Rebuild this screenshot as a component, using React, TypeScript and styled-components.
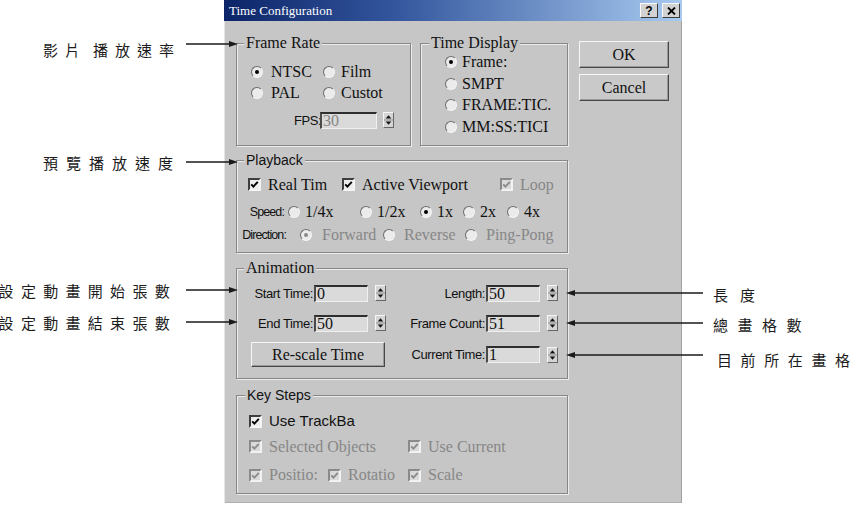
import React from "react";
import styled, { createGlobalStyle } from "styled-components";

const SERIF = `"Liberation Serif", "Times New Roman", serif`;
const SANS = `"Liberation Sans", Arial, sans-serif`;
const CJK = `"Noto Sans CJK TC", "Noto Sans CJK SC", sans-serif`;
const FACE = "#c6c6c6";
const INK = "#111";
const DIM = "#878787";

const GlobalStyle = createGlobalStyle`
  html, body {
    margin: 0;
    padding: 0;
    background: #fff;
  }
  body {
    width: 866px;
    height: 517px;
    overflow: hidden;
  }
`;

const Page = styled.div`
  display: flex;
  align-items: flex-start;
  width: 866px;
  height: 517px;
  overflow: hidden;
`;

/* ---------- callouts ---------- */

const LeftNotes = styled.div`
  flex: none;
  width: 224px;
  display: flex;
  flex-direction: column;
  align-items: flex-end;
  position: relative;
  z-index: 1;
`;

const RightNotes = styled.div`
  flex: 1;
  display: flex;
  flex-direction: column;
  align-items: flex-start;
  position: relative;
  z-index: 1;
`;

const LeftNote = styled.div<{ $mt: number }>`
  display: flex;
  align-items: center;
  justify-content: flex-end;
  width: 238px;
  height: 20px;
  margin: ${(p) => p.$mt}px -14px 0 0;
`;

const RightNote = styled.div<{ $mt: number }>`
  display: flex;
  align-items: center;
  height: 20px;
  margin: ${(p) => p.$mt}px 0 0 -116px;
`;

const NoteText = styled.span<{ $ls: number; $dy?: number; $mr?: number; $ml?: number }>`
  flex: none;
  font-family: ${CJK};
  font-size: 15px;
  line-height: 20px;
  letter-spacing: ${(p) => p.$ls}px;
  color: #1c1c1c;
  white-space: nowrap;
  margin-top: ${(p) => (p.$dy ?? 0) * 2}px;
  margin-right: ${(p) => p.$mr ?? 0}px;
  margin-left: ${(p) => p.$ml ?? 0}px;
`;

const Gap = styled.span<{ $w: number }>`
  display: inline-block;
  width: ${(p) => p.$w}px;
`;

function Arrow({ w, left }: { w: number; left?: boolean }) {
  return (
    <svg width={w} height="10" viewBox={`0 0 ${w} 10`} style={{ flex: "none" }}>
      {left ? (
        <>
          <line x1="6" y1="5" x2={w} y2="5" stroke="#1a1a1a" strokeWidth="1.5" />
          <polygon points="0,5 9,2 9,8" fill="#1a1a1a" />
        </>
      ) : (
        <>
          <line x1="0" y1="5" x2={w - 6} y2="5" stroke="#1a1a1a" strokeWidth="1.5" />
          <polygon points={`${w - 9},2 ${w},5 ${w - 9},8`} fill="#1a1a1a" />
        </>
      )}
    </svg>
  );
}

/* ---------- dialog frame ---------- */

const Dialog = styled.div`
  flex: none;
  width: 458px;
  height: 503px;
  background: ${FACE};
  display: flex;
  flex-direction: column;
  box-shadow: inset 1px 0 0 #e6e6e6, inset -1px 0 0 #a2a2a2, inset 0 -1px 0 #b0b0b0;
`;

const TitleBar = styled.div`
  height: 21px;
  display: flex;
  align-items: center;
  justify-content: space-between;
  padding: 0 2px 0 5px;
  background: linear-gradient(90deg, #0c2468 0%, #34579e 38%, #a8caf0 100%);
`;

const Title = styled.span`
  font-family: ${SERIF};
  font-size: 13px;
  color: #fff;
  white-space: nowrap;
`;

const TitleButtons = styled.div`
  display: flex;
  gap: 4px;
`;

const TitleBtn = styled.div`
  box-sizing: border-box;
  width: 18px;
  height: 15px;
  display: flex;
  align-items: center;
  justify-content: center;
  background: #d2d2d2;
  border: 1px solid;
  border-color: #fafafa #3c3c3c #3c3c3c #fafafa;
  font-family: ${SANS};
  font-weight: bold;
  font-size: 12px;
  color: #000;
`;

const Body = styled.div`
  display: flex;
  flex-direction: column;
  padding: 20px 13px 0 12px;
`;

const TopRow = styled.div`
  display: flex;
  align-items: stretch;
`;

const ButtonCol = styled.div`
  display: flex;
  flex-direction: column;
  gap: 6px;
  margin-left: 11px;
`;

const PushButton = styled.button<{ $w: number; $h: number; $ml?: number }>`
  box-sizing: border-box;
  flex: none;
  width: ${(p) => p.$w}px;
  height: ${(p) => p.$h}px;
  margin: 0 0 0 ${(p) => p.$ml ?? 0}px;
  padding: 0;
  background: #c9c9c9;
  border: 1px solid;
  border-color: #f6f6f6 #474747 #474747 #f6f6f6;
  box-shadow: inset -1px -1px 0 #999;
  font-family: ${SERIF};
  font-size: 16px;
  color: ${INK};
`;

/* ---------- group boxes ---------- */

const Group = styled.div<{ $w: number; $mt?: number; $ml?: number; $pb?: number }>`
  box-sizing: border-box;
  flex: none;
  width: ${(p) => p.$w}px;
  margin: ${(p) => p.$mt ?? 0}px 0 0 ${(p) => p.$ml ?? 0}px;
  padding-bottom: ${(p) => p.$pb ?? 0}px;
  border: 1px solid #878787;
  box-shadow: inset 1px 1px 0 #ececec, 1px 1px 0 #ececec;
  display: flex;
  flex-direction: column;
  align-items: flex-start;
`;

const Legend = styled.div<{ $sans?: boolean; $ml?: number }>`
  margin: -9px 0 0 ${(p) => p.$ml ?? 7}px;
  padding: 0 2px;
  height: 16px;
  line-height: 16px;
  background: ${FACE};
  font-family: ${(p) => (p.$sans ? SANS : SERIF)};
  font-size: ${(p) => (p.$sans ? 14 : 16)}px;
  color: ${INK};
  white-space: nowrap;
`;

const Row = styled.div<{ $mt?: number; $pl?: number; $h?: number }>`
  display: flex;
  align-items: center;
  height: ${(p) => p.$h ?? 20}px;
  margin-top: ${(p) => p.$mt ?? 0}px;
  padding-left: ${(p) => p.$pl ?? 0}px;
`;

const OptGroup = styled.div<{ $ml: number }>`
  display: flex;
  align-items: center;
  margin-left: ${(p) => p.$ml}px;
`;

const Opt = styled.div<{ $w?: number; $gap?: number }>`
  flex: none;
  display: flex;
  align-items: center;
  width: ${(p) => (p.$w ? `${p.$w}px` : "auto")};
  gap: ${(p) => p.$gap ?? 6}px;
`;

const OptText = styled.span<{ $dim?: boolean; $sans?: boolean }>`
  font-family: ${(p) => (p.$sans ? SANS : SERIF)};
  font-size: ${(p) => (p.$sans ? 15 : 16)}px;
  line-height: 18px;
  color: ${(p) => (p.$dim ? DIM : INK)};
  white-space: nowrap;
`;

const Radio = styled.span<{ $on?: boolean; $dim?: boolean }>`
  box-sizing: border-box;
  flex: none;
  width: 12px;
  height: 12px;
  border-radius: 50%;
  background: #ebebeb;
  border: 1.5px solid;
  border-color: #6c6c6c #f4f4f4 #f4f4f4 #6c6c6c;
  display: flex;
  align-items: center;
  justify-content: center;
  &::after {
    content: "";
    width: 4px;
    height: 4px;
    border-radius: 50%;
    background: ${(p) => (p.$on ? (p.$dim ? "#8a8a8a" : "#000") : "transparent")};
  }
`;

const Box = styled.span<{ $dim?: boolean }>`
  box-sizing: border-box;
  flex: none;
  width: 13px;
  height: 13px;
  background: ${(p) => (p.$dim ? "#dadada" : "#ededed")};
  border: 2px solid;
  border-color: ${(p) => (p.$dim ? "#8a8a8a #f2f2f2 #f2f2f2 #8a8a8a" : "#3e3e3e #f4f4f4 #f4f4f4 #3e3e3e")};
  display: flex;
  align-items: center;
  justify-content: center;
`;

function CheckBox({ dim }: { dim?: boolean }) {
  return (
    <Box $dim={dim}>
      <svg width="9" height="9" viewBox="0 0 9 9">
        <path d="M1.2 4.3 L3.4 6.6 L7.8 1.8" fill="none" stroke={dim ? "#8c8c8c" : "#000"} strokeWidth="1.9" />
      </svg>
    </Box>
  );
}

const SmallLabel = styled.span<{ $w: number; $size?: number; $ls?: number }>`
  box-sizing: border-box;
  flex: none;
  width: ${(p) => p.$w}px;
  padding-right: 1px;
  text-align: right;
  font-family: ${SANS};
  font-size: ${(p) => p.$size ?? 13}px;
  letter-spacing: ${(p) => p.$ls ?? -0.4}px;
  color: ${INK};
  white-space: nowrap;
`;

const Field = styled.div<{ $w: number; $dim?: boolean }>`
  box-sizing: border-box;
  flex: none;
  width: ${(p) => p.$w}px;
  height: 17px;
  padding-left: 1px;
  background: #dadada;
  border-style: solid;
  border-width: 2px 1px 1px 2px;
  border-color: #2e2e2e #f0f0f0 #f0f0f0 #4a4a4a;
  font-family: ${SERIF};
  font-size: 16px;
  line-height: 14px;
  color: ${(p) => (p.$dim ? DIM : INK)};
  white-space: nowrap;
`;

const Spin = styled.div<{ $ml: number }>`
  box-sizing: border-box;
  flex: none;
  width: 11px;
  height: 16px;
  margin-left: ${(p) => p.$ml}px;
  background: #d4d4d4;
  border: 1px solid;
  border-color: #f6f6f6 #666 #666 #f6f6f6;
  display: flex;
`;

function Spinner({ ml = 7 }: { ml?: number }) {
  return (
    <Spin $ml={ml}>
      <svg width="9" height="14" viewBox="0 0 9 14">
        <polygon points="4.5,2.2 7.3,5.6 1.7,5.6" fill="#111" />
        <line x1="0" y1="7" x2="9" y2="7" stroke="#8e8e8e" strokeWidth="1" />
        <polygon points="1.7,8.4 7.3,8.4 4.5,11.8" fill="#111" />
      </svg>
    </Spin>
  );
}

function SpinField({ label, value, lw, dim }: { label: string; value: string; lw: number; dim?: boolean }) {
  return (
    <>
      <SmallLabel $w={lw}>{label}</SmallLabel>
      <Field $w={54} $dim={dim}>
        {value}
      </Field>
      <Spinner />
    </>
  );
}

function RadioOpt(props: { text: string; w?: number; gap?: number; on?: boolean; dim?: boolean }) {
  return (
    <Opt $w={props.w} $gap={props.gap}>
      <Radio $on={props.on} $dim={props.dim} />
      <OptText $dim={props.dim}>{props.text}</OptText>
    </Opt>
  );
}

function CheckOpt(props: { text: string; w?: number; dim?: boolean; sans?: boolean }) {
  return (
    <Opt $w={props.w} $gap={7}>
      <CheckBox dim={props.dim} />
      <OptText $dim={props.dim} $sans={props.sans}>
        {props.text}
      </OptText>
    </Opt>
  );
}

export default function App() {
  return (
    <>
      <GlobalStyle />
      <Page>
        <LeftNotes>
          <LeftNote $mt={34}>
            <NoteText $ls={7} $dy={6} $mr={5}>
              影片
              <Gap $w={6} />
              播放速率
            </NoteText>
            <Arrow w={52} />
          </LeftNote>
          <LeftNote $mt={98}>
            <NoteText $ls={8} $dy={1} $mr={5}>
              預覽播放速度
            </NoteText>
            <Arrow w={52} />
          </LeftNote>
          <LeftNote $mt={108}>
            <NoteText $ls={7.3} $dy={1} $mr={9}>
              設定動畫開始張數
            </NoteText>
            <Arrow w={52} />
          </LeftNote>
          <LeftNote $mt={12}>
            <NoteText $ls={7.3} $dy={1} $mr={9}>
              設定動畫結束張數
            </NoteText>
            <Arrow w={52} />
          </LeftNote>
        </LeftNotes>

        <Dialog>
          <TitleBar>
            <Title>Time Configuration</Title>
            <TitleButtons>
              <TitleBtn>?</TitleBtn>
              <TitleBtn>
                <svg width="9" height="8" viewBox="0 0 9 8">
                  <path d="M1 0.5 L8 7.5 M8 0.5 L1 7.5" stroke="#000" strokeWidth="1.8" />
                </svg>
              </TitleBtn>
            </TitleButtons>
          </TitleBar>

          <Body>
            <TopRow>
              <Group $w={175} $mt={2} $pb={16}>
                <Legend>Frame Rate</Legend>
                <Row $mt={10} $pl={14} $h={21}>
                  <RadioOpt text="NTSC" w={72} gap={8} on />
                  <RadioOpt text="Film" gap={6} />
                </Row>
                <Row $pl={14} $h={21}>
                  <RadioOpt text="PAL" w={72} gap={8} />
                  <RadioOpt text="Custot" gap={6} />
                </Row>
                <Row $mt={8} $pl={57} $h={18}>
                  <SmallLabel $w={26}>FPS:</SmallLabel>
                  <Field $w={57} $dim>
                    30
                  </Field>
                  <Spinner ml={6} />
                </Row>
              </Group>

              <Group $w={148} $mt={2} $ml={9}>
                <Legend $ml={8}>Time Display</Legend>
                <Row $mt={0.5} $pl={24} $h={21.5}>
                  <RadioOpt text="Frame:" gap={5} on />
                </Row>
                <Row $pl={24} $h={21.5}>
                  <RadioOpt text="SMPT" gap={5} />
                </Row>
                <Row $pl={24} $h={21.5}>
                  <RadioOpt text="FRAME:TIC." gap={5} />
                </Row>
                <Row $pl={24} $h={21.5}>
                  <RadioOpt text="MM:SS:TICI" gap={5} />
                </Row>
              </Group>

              <ButtonCol>
                <PushButton $w={90} $h={27}>
                  OK
                </PushButton>
                <PushButton $w={90} $h={27}>
                  Cancel
                </PushButton>
              </ButtonCol>
            </TopRow>

            <Group $w={332} $mt={14} $pb={7}>
              <Legend $sans>Playback</Legend>
              <Row $mt={6.5} $pl={11}>
                <CheckOpt text="Real Tim" w={94} />
                <CheckOpt text="Active Viewport" w={158} />
                <CheckOpt text="Loop" dim />
              </Row>
              <Row $mt={7.5}>
                <SmallLabel $w={48} $size={12.5} $ls={-0.9}>
                  Speed:
                </SmallLabel>
                <OptGroup $ml={3}>
                  <RadioOpt text="1/4x" w={72} gap={5} />
                  <RadioOpt text="1/2x" w={60} gap={5} />
                  <RadioOpt text="1x" w={43} gap={5} on />
                  <RadioOpt text="2x" w={44} gap={5} />
                  <RadioOpt text="4x" gap={5} />
                </OptGroup>
              </Row>
              <Row $mt={3}>
                <SmallLabel $w={50} $size={12.5} $ls={-0.9}>
                  Direction:
                </SmallLabel>
                <OptGroup $ml={13}>
                  <RadioOpt text="Forward" w={83} gap={10} on dim />
                  <RadioOpt text="Reverse" w={82} gap={9} dim />
                  <RadioOpt text="Ping-Pong" gap={9} dim />
                </OptGroup>
              </Row>
            </Group>

            <Group $w={332} $mt={15} $pb={11}>
              <Legend>Animation</Legend>
              <Row $mt={7}>
                <SpinField label="Start Time:" value="0" lw={77} />
                <SpinField label="Length:" value="50" lw={100} />
              </Row>
              <Row $mt={10}>
                <SpinField label="End Time:" value="50" lw={77} />
                <SpinField label="Frame Count:" value="51" lw={100} />
              </Row>
              <Row $mt={9} $h={25}>
                <PushButton $w={134} $h={25} $ml={14}>
                  Re-scale Time
                </PushButton>
                <SpinField label="Current Time:" value="1" lw={101} />
              </Row>
            </Group>

            <Group $w={332} $mt={16} $pb={8}>
              <Legend $sans $ml={8}>
                Key Steps
              </Legend>
              <Row $mt={8} $pl={12}>
                <CheckOpt text="Use TrackBa" sans />
              </Row>
              <Row $mt={5.5} $pl={12}>
                <CheckOpt text="Selected Objects" w={159} dim />
                <CheckOpt text="Use Current" dim />
              </Row>
              <Row $mt={8.5} $pl={12}>
                <CheckOpt text="Positio:" w={79} dim />
                <CheckOpt text="Rotatio" w={80} dim />
                <CheckOpt text="Scale" dim />
              </Row>
            </Group>
          </Body>
        </Dialog>

        <RightNotes>
          <RightNote $mt={283}>
            <Arrow w={137} left />
            <NoteText $ls={12} $dy={2} $ml={10}>
              長度
            </NoteText>
          </RightNote>
          <RightNote $mt={10}>
            <Arrow w={137} left />
            <NoteText $ls={9.5} $dy={2} $ml={10}>
              總畫格數
            </NoteText>
          </RightNote>
          <RightNote $mt={12}>
            <Arrow w={137} left />
            <NoteText $ls={8.6} $dy={5} $ml={14}>
              目前所在畫格
            </NoteText>
          </RightNote>
        </RightNotes>
      </Page>
    </>
  );
}
